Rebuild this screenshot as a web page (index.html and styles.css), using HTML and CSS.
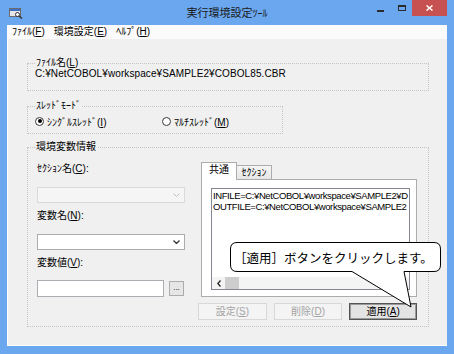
FILE: index.html
```html
<!DOCTYPE html>
<html>
  <head>
    <title>実行環境設定ツール</title>
    <meta charset="utf-8" />
    <link rel="stylesheet" href="styles.css">
  </head>
  <body>
    <div class="window">
      <div class="titlebar">
        <div class="title-left">
          <svg class="app-icon" width="14" height="11" viewBox="0 0 14 11">
            <rect x="0.5" y="0.5" width="11" height="8" fill="#e6e6e6" stroke="#6b6b6b" />
            <rect x="1" y="1" width="10" height="2" fill="#3a6fc4" />
            <circle cx="8.5" cy="6.5" r="2" fill="#fff" stroke="#333" />
            <path d="M10 8 L13 10.5" stroke="#333" stroke-width="1.5" />
          </svg>
        </div>
        <div class="title">実行環境設定<span class="title-kana">ﾂｰﾙ</span></div>
        <div class="caption-buttons">
          <span class="cap-min"></span>
          <span class="cap-max"></span>
          <span class="cap-close">
            <svg width="7" height="6" viewBox="0 0 7 6">
              <path d="M0.5 0.5 L6.5 5.5 M6.5 0.5 L0.5 5.5" stroke="#fff" stroke-width="1.5" />
            </svg>
          </span>
        </div>
      </div>

      <div class="menubar">
        <span class="menu-item">ﾌｧｲﾙ(<u>F</u>)</span>
        <span class="menu-item">環境設定(<u>E</u>)</span>
        <span class="menu-item">ﾍﾙﾌﾟ(<u>H</u>)</span>
      </div>

      <div class="client">
        <fieldset class="group group-file">
          <legend>ﾌｧｲﾙ名(<u>L</u>)</legend>
          <div class="path">C:¥NetCOBOL¥workspace¥SAMPLE2¥COBOL85.CBR</div>
        </fieldset>

        <fieldset class="group group-thread">
          <legend>ｽﾚｯﾄﾞﾓｰﾄﾞ</legend>
          <div class="radios">
            <label class="radio-option first">
              <span class="radio checked"></span>
              <span>ｼﾝｸﾞﾙｽﾚｯﾄﾞ(<u>I</u>)</span>
            </label>
            <label class="radio-option">
              <span class="radio"></span>
              <span>ﾏﾙﾁｽﾚｯﾄﾞ(<u>M</u>)</span>
            </label>
          </div>
        </fieldset>

        <fieldset class="group group-env">
          <legend>環境変数情報</legend>
          <div class="env-body">
            <div class="env-fields">
              <div class="field-label">ｾｸｼｮﾝ名(<u>C</u>):</div>
              <div class="combo disabled">
                <svg width="7" height="4" viewBox="0 0 7 4"><path d="M0.5 0.5 L3.5 3.5 L6.5 0.5" fill="none" stroke="#c0c0c0" /></svg>
              </div>
              <div class="field-label">変数名(<u>N</u>):</div>
              <div class="combo">
                <svg width="7" height="4" viewBox="0 0 7 4"><path d="M0.5 0.5 L3.5 3.5 L6.5 0.5" fill="none" stroke="#333" stroke-width="1.3" /></svg>
              </div>
              <div class="field-label">変数値(<u>V</u>):</div>
              <div class="value-row">
                <div class="textbox"></div>
                <div class="browse">...</div>
              </div>
            </div>

            <div class="tab-control">
              <div class="tabs">
                <div class="tab active">共通</div>
                <div class="tab">ｾｸｼｮﾝ</div>
              </div>
              <div class="tab-panel">
                <div class="listbox">
                  <div class="list-lines">
                    <div>INFILE=C:¥NetCOBOL¥workspace¥SAMPLE2¥D</div>
                    <div>OUTFILE=C:¥NetCOBOL¥workspace¥SAMPLE2</div>
                  </div>
                  <div class="hscroll">
                    <span class="scroll-arrow">
                      <svg width="4" height="7" viewBox="0 0 4 7"><path d="M3.5 0.5 L0.8 3.5 L3.5 6.5" fill="none" stroke="#222" stroke-width="1.3" /></svg>
                    </span>
                    <span class="scroll-thumb"></span>
                    <span class="scroll-track"></span>
                    <span class="scroll-arrow">
                      <svg width="4" height="7" viewBox="0 0 4 7"><path d="M0.5 0.5 L3.2 3.5 L0.5 6.5" fill="none" stroke="#222" stroke-width="1.3" /></svg>
                    </span>
                  </div>
                </div>
              </div>
              <div class="button-row">
                <div class="btn">設定(<u>S</u>)</div>
                <div class="btn">削除(<u>D</u>)</div>
                <div class="btn default">適用(<u>A</u>)</div>
              </div>
            </div>
          </div>
        </fieldset>
      </div>

      <div class="callout">
        <svg class="callout-shape" width="216" height="70" viewBox="0 0 216 70">
          <path d="M9 2.5 H206 Q212.5 2.5 212.5 9 V25 Q212.5 31.5 206 31.5 H176 L183 67 L124 31.5 H9 Q2.5 31.5 2.5 25 V9 Q2.5 2.5 9 2.5 Z" fill="#fff" stroke="#000" />
        </svg>
        <div class="callout-text">［適用］ボタンをクリックします。</div>
      </div>
    </div>
  </body>
</html>
```

FILE: styles.css
```css
body {
	margin: 0;
	font-family: "Liberation Sans", "Noto Sans CJK JP", sans-serif;
	font-size: 10px;
	color: #000;
}

u {
	text-decoration: underline;
	text-underline-offset: 1px;
}

/* Window frame */

.window {
	position: relative;
	width: 454px;
	height: 354px;
	box-sizing: border-box;
	padding: 0 7px 8px;
	background: #6ba7ef;
	display: flex;
	flex-direction: column;
}

.titlebar {
	height: 25px;
	flex: none;
	display: grid;
	grid-template-columns: 1fr auto 1fr;
	align-items: start;
}

.app-icon {
	display: block;
	margin: 8px 0 0 2px;
}

.title {
	font-family: "Noto Sans CJK JP", sans-serif;
	font-size: 11px;
	line-height: 13px;
	padding-top: 6px;
	color: #1a1a1a;
}

.title-kana {
	font-size: 10px;
}

.caption-buttons {
	justify-self: end;
	display: flex;
	align-items: flex-start;
}

.cap-min {
	width: 7px;
	height: 2px;
	background: #2b2b2b;
	margin: 10px 14px 0 0;
}

.cap-max {
	width: 8px;
	height: 6px;
	box-sizing: border-box;
	border: 1px solid #2b2b2b;
	border-top-width: 2px;
	margin: 5px 6px 0 0;
}

.cap-close {
	width: 35px;
	height: 16px;
	background: #c75050;
	display: flex;
	align-items: center;
	justify-content: center;
}

.cap-close svg {
	display: block;
}

.menubar {
	height: 14px;
	flex: none;
	background: #fbfbfb;
	display: flex;
	align-items: center;
	gap: 9px;
	padding-left: 5px;
	line-height: 14px;
}

.client {
	flex: 1;
	background: #f0f0f0;
	padding: 18px 18px 0 20px;
	box-shadow: inset 1px 0 0 #fff, inset 0 -1px 0 #fff;
}

/* Group boxes */

.group {
	margin: 0;
	padding: 0 10px 11px 7px;
	border: 1px dotted #c4c4c4;
	min-width: 0;
}

.group legend {
	padding: 0 1px;
	line-height: 12px;
}

.path {
	font-size: 10px;
	letter-spacing: 0.1px;
	line-height: 10px;
	white-space: nowrap;
}

.list-lines {
	font-size: 9.5px;
	letter-spacing: -0.4px;
	white-space: nowrap;
}

.group-thread {
	width: 256px;
	box-sizing: border-box;
	margin-top: 9px;
	padding-top: 2px;
	padding-bottom: 5px;
}

.radios {
	display: flex;
	align-items: center;
	height: 14px;
}

.radio-option {
	display: flex;
	align-items: center;
	gap: 3px;
}

.radio-option.first {
	width: 127px;
}

.radio {
	width: 9px;
	height: 9px;
	box-sizing: border-box;
	border: 1px solid #3a3a3a;
	border-radius: 50%;
	background: #fff;
	display: flex;
	align-items: center;
	justify-content: center;
}

.radio.checked::after {
	content: "";
	width: 4px;
	height: 4px;
	border-radius: 50%;
	background: #000;
}

.group-env {
	margin-top: 7px;
	padding-bottom: 6px;
}

.env-body {
	display: grid;
	grid-template-columns: 148px 216px;
	column-gap: 16px;
	margin-left: 2px;
	align-items: start;
}

.env-fields {
	display: flex;
	flex-direction: column;
}

.field-label {
	line-height: 12px;
	margin-top: 7px;
}

.field-label:first-child {
	margin-top: 10px;
}

.combo {
	height: 16px;
	box-sizing: border-box;
	margin-top: 12px;
	border: 1px solid #acacac;
	background: #fff;
	display: flex;
	align-items: center;
	justify-content: flex-end;
	padding-right: 4px;
}

.combo svg {
	display: block;
}

.combo.disabled {
	border-color: #dadada;
	background: #f5f5f5;
}

.value-row {
	display: flex;
	align-items: center;
	margin-top: 11px;
}

.textbox {
	width: 127px;
	height: 17px;
	box-sizing: border-box;
	border: 1px solid #abadb3;
	background: #fff;
}

.browse {
	width: 15px;
	height: 15px;
	box-sizing: border-box;
	margin-left: 5px;
	border: 1px solid #acacac;
	background: #e6e6e6;
	font-size: 8px;
	line-height: 11px;
	text-align: center;
}

/* Tab control */

.tab-control {
	margin-top: 9px;
}

.tabs {
	display: flex;
	align-items: flex-end;
	height: 18px;
	margin-bottom: -1px;
}

.tab {
	box-sizing: border-box;
	border: 1px solid #acacac;
	text-align: center;
}

.tab.active {
	position: relative;
	z-index: 1;
	width: 36px;
	height: 18px;
	background: #fff;
	border-bottom: none;
	line-height: 11px;
	font-family: "Noto Sans CJK JP", sans-serif;
}

.tab:not(.active) {
	width: 35px;
	height: 15px;
	border-left: none;
	background: linear-gradient(#f5f5f5, #e6e6e6);
	line-height: 13px;
}

.tab-panel {
	height: 118px;
	box-sizing: border-box;
	border: 1px solid #acacac;
	background: #fff;
	padding: 8px 6px 6px 9px;
}

.listbox {
	height: 102px;
	box-sizing: border-box;
	border: 1px solid #828790;
	display: flex;
	flex-direction: column;
	overflow: hidden;
}

.list-lines {
	flex: 1;
	overflow: hidden;
	padding: 2px 1px 0;
	line-height: 10.5px;
}

.hscroll {
	height: 12px;
	display: flex;
	background: #f4f4f4;
}

.scroll-arrow {
	width: 13px;
	display: flex;
	align-items: center;
	justify-content: center;
}

.scroll-thumb {
	width: 14px;
	background: #cdcdcd;
}

.scroll-track {
	flex: 1;
}

.button-row {
	display: flex;
	gap: 7px;
	margin: 6px 0 0 -3px;
}

.btn {
	width: 69px;
	height: 17px;
	box-sizing: border-box;
	border: 1px solid #d8d8d8;
	background: #f4f4f4;
	color: #a3a3a3;
	text-align: center;
	line-height: 15px;
}

.btn.default {
	width: 68px;
	color: #000;
	border-color: #555;
	background: #e3e3e3;
	box-shadow: inset 0 0 0 1px #9a9a9a;
}

/* Callout */

.callout {
	position: absolute;
	left: 228px;
	top: 240px;
	width: 216px;
	height: 70px;
}

.callout-shape {
	position: absolute;
	left: 0;
	top: 0;
}

.callout-text {
	position: absolute;
	left: 6px;
	top: 2px;
	height: 30px;
	display: flex;
	align-items: center;
	font-family: "Noto Sans CJK JP", sans-serif;
	font-size: 12.5px;
	white-space: nowrap;
}
```
